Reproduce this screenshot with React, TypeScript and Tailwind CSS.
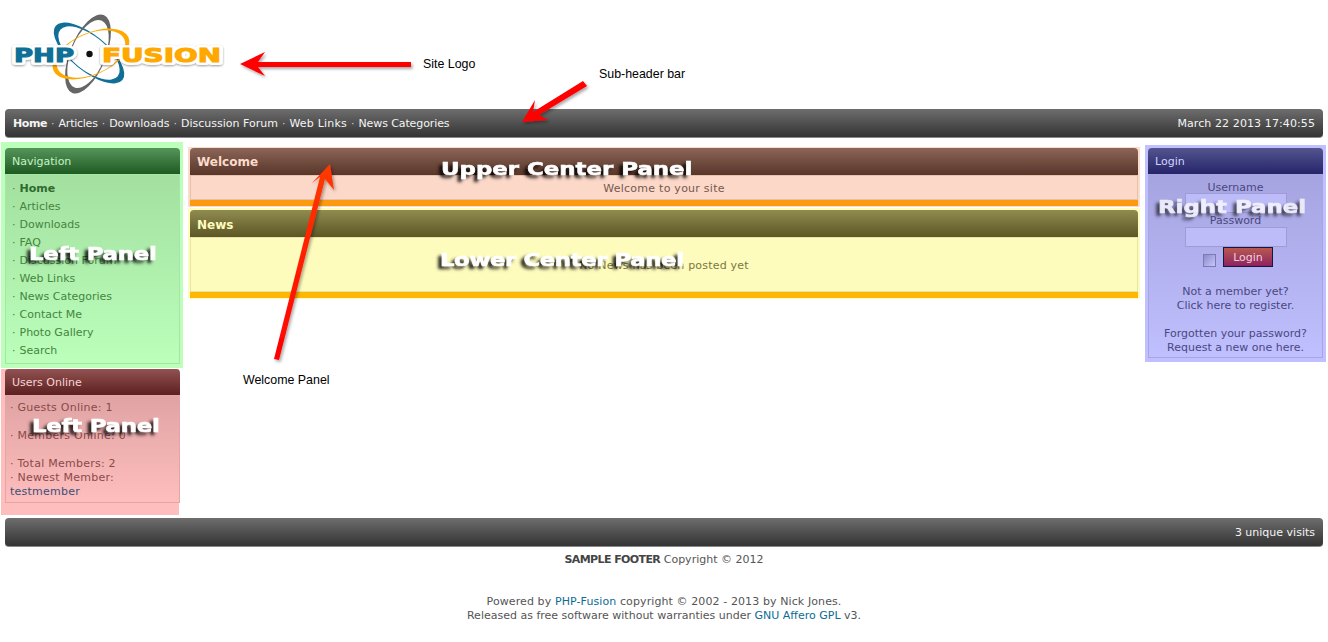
const F = "font-['DejaVu_Sans',Verdana,sans-serif]";

function Overlay({ x, y, text, cls = "" }: { x: number; y: number; text: string; cls?: string }) {
  return (
    <div
      className={`absolute origin-left scale-x-[1.27] font-['DejaVu_Sans',sans-serif] font-bold text-[18px] leading-[20px] text-white whitespace-nowrap [-webkit-text-stroke:0.6px_white] [text-shadow:-3px_3px_3px_rgba(0,0,0,0.9)] ${cls}`}
      style={{ left: x, top: y }}
    >
      {text}
    </div>
  );
}

function Note({ x, y, text }: { x: number; y: number; text: string }) {
  return (
    <div className="absolute font-['Liberation_Sans',sans-serif] text-[12.4px] leading-[14px] text-black whitespace-nowrap" style={{ left: x, top: y }}>
      {text}
    </div>
  );
}

function Ring({ cx, cy, a, b, t, side, angle, color }: { cx: number; cy: number; a: number; b: number; t: number; side: number; angle: number; color: string }) {
  // crescent ring: thick at the two ends of the long axis, thin along the sides
  const e = (rx: number, ry: number) => `M${cx - rx} ${cy}A${rx} ${ry} 0 1 0 ${cx + rx} ${cy}A${rx} ${ry} 0 1 0 ${cx - rx} ${cy}Z`;
  return <path d={`${e(a, b)}${e(a - t, b - side)}`} fillRule="evenodd" fill={color} transform={`rotate(${angle} ${cx} ${cy})`} />;
}

function Logo() {
  const txt = { fontFamily: "DejaVu Sans", fontWeight: "bold", fontSize: 19 } as const;
  return (
    <svg width="240" height="100" viewBox="0 0 240 100" className="block">
      <defs>
        <filter id="ls" x="-10%" y="-40%" width="120%" height="180%">
          <feDropShadow dx="0" dy="1" stdDeviation="1.2" floodColor="#000" floodOpacity="0.4" />
        </filter>
      </defs>
      <Ring cx={89} cy={53} a={43} b={18} t={6} side={1} angle={39} color="#0f6f96" />
      <Ring cx={88} cy={54} a={42} b={18} t={6} side={1} angle={-68} color="#666666" />
      <Ring cx={91} cy={54} a={41} b={21} t={4.5} side={0.7} angle={-24} color="#ffa800" />
      <g filter="url(#ls)" stroke="#fff" strokeWidth="6" strokeLinejoin="round">
        <text x="14" y="62" textLength="60" lengthAdjust="spacingAndGlyphs" {...txt} fill="#fff">PHP</text>
        <text x="102" y="62" textLength="119" lengthAdjust="spacingAndGlyphs" {...txt} fill="#fff">FUSION</text>
      </g>
      <text x="14" y="62" textLength="60" lengthAdjust="spacingAndGlyphs" {...txt} fill="#0f6f96" stroke="#0f6f96" strokeWidth="1">PHP</text>
      <circle cx="89.5" cy="54" r="7" fill="#fff" />
      <circle cx="89.5" cy="54" r="3.2" fill="#111" />
      <text x="102" y="62" textLength="119" lengthAdjust="spacingAndGlyphs" {...txt} fill="#ffa800" stroke="#ffa800" strokeWidth="1">FUSION</text>
    </svg>
  );
}

function Bar({ left, right }: { left?: React.ReactNode; right: React.ReactNode }) {
  return (
    <div className="mx-[5px] h-[29px] rounded-[4px] bg-gradient-to-b from-[#6e6e6e] to-[#343434] border-b border-[#8a8a8a] flex items-center justify-between px-2 pt-[2px] text-[#f4f4f4] text-[11px]">
      <div>{left}</div>
      <div>{right}</div>
    </div>
  );
}

function SideHead({ title, cls }: { title: string; cls: string }) {
  return (
    <div className={`h-[26px] rounded-t-[4px] flex items-center px-[7px] pt-[3px] text-[11px] ${cls}`}>{title}</div>
  );
}

const navItems = ["Home", "Articles", "Downloads", "FAQ", "Discussion Forum", "Web Links", "News Categories", "Contact Me", "Photo Gallery", "Search"];
const topItems = [
  { t: "Articles", c: "tracking-[-0.25px]" },
  { t: "Downloads", c: "" },
  { t: "Discussion Forum", c: "" },
  { t: "Web Links", c: "tracking-[0.2px]" },
  { t: "News Categories", c: "tracking-[-0.1px]" },
];

export default function App() {
  return (
    <div className={`relative w-[1328px] h-[642px] overflow-hidden bg-white text-[11px] ${F}`}>
      <header className="h-[109px]">
        <Logo />
      </header>

      <Bar
        left={
          <span>
            <b className="tracking-[-0.4px]">Home</b>
            {topItems.map(({ t, c }) => (
              <span key={t}>
                <span className="mx-[4px] text-[#ccc]">·</span>
                <span className={c}>{t}</span>
              </span>
            ))}
          </span>
        }
        right={<span className="tracking-[0.1px]">March 22 2013 17:40:55</span>}
      />

      <main className="flex items-start mt-[4px] h-[376px]">
        {/* left column */}
        <aside className="w-[188px] shrink-0 flex flex-col pl-[1px]">
          <div className="w-[182px] h-[226px] bg-[#bbffbb] pt-[6px] pl-[4px] pr-[3px]">
            <SideHead title="Navigation" cls="bg-gradient-to-b from-[#55955a] to-[#1d5b23] text-[#c6f2c6]" />
            <div className="h-[190px] border border-[#a5e5a5] bg-gradient-to-b from-[#a3e09f] to-[#bbffbb] pt-[5px] pl-[6px] text-[#45853f]">
              {navItems.map((n, i) => (
                <div key={n} className="h-[18px] leading-[18px] whitespace-nowrap">
                  <span className="mr-[4px]">·</span>
                  {i === 0 ? <b className="text-[#2f6a2f]">{n}</b> : n}
                </div>
              ))}
            </div>
          </div>
          <div className="w-[178px] h-[146px] mt-[1px] bg-[#ffbebe] pl-[4px] relative">
            <div className="w-[175px]">
              <SideHead title="Users Online" cls="bg-gradient-to-b from-[#925252] to-[#5c2020] text-[#f5d5d5]" />
              <div className="h-[108px] border border-[#e5a5a5] bg-gradient-to-b from-[#e0a3a3] to-[#ffbebe] pt-[5px] pl-[4px] text-[#8a4a4a] leading-[14px] tracking-[0.25px]">
                <div>· Guests Online: 1</div>
                <div className="mt-[14px]">· Members Online: 0</div>
                <div className="mt-[14px]">· Total Members: 2</div>
                <div>· Newest Member:</div>
                <div className="text-[#3a5078]">testmember</div>
              </div>
            </div>
          </div>
        </aside>

        {/* center column */}
        <section className="flex-1 min-w-0 flex flex-col pt-[5px]">
          <div className="w-[952px] h-[60px] bg-[#fbdccb] px-[2px] pt-[1px]">
            <div className="h-[27px] rounded-t-[4px] bg-gradient-to-b from-[#8c6658] to-[#583629] flex items-center px-[7px] pt-[1px] font-bold text-[12px] text-[#fbdccb]">Welcome</div>
            <div className="h-[25px] border border-[#e8c0ae] bg-[#fcd8c8] text-center leading-[25px] text-[#75584e] tracking-[0.25px]">Welcome to your site</div>
            <div className="h-[6px] bg-[#fb9a0e]" />
          </div>
          <div className="w-[952px] mt-[1px] h-[91px] bg-[#fefcbd] px-[2px] pt-[2px]">
            <div className="h-[27px] rounded-t-[4px] bg-gradient-to-b from-[#908c50] to-[#5c5725] flex items-center px-[7px] pt-[2px] font-bold text-[12px] text-[#fefcbd]">News</div>
            <div className="h-[55px] border border-[#e8e4a8] bg-[#fefcbd] text-center leading-[56px] text-[#7a7640] tracking-[0.2px]">No News has been posted yet</div>
            <div className="h-[6px] bg-[#fdb805]" />
          </div>
        </section>

        {/* right column */}
        <aside className="w-[181px] h-[217px] shrink-0 mr-[2px] mt-[3px] bg-[#c0bfff] pt-[3px] px-[3px]">
          <SideHead title="Login" cls="bg-gradient-to-b from-[#54548f] to-[#26246a] text-[#d4d3ff]" />
          <div className="h-[184px] border border-[#a8a6e0] bg-gradient-to-b from-[#a6a4e0] to-[#c0bfff] text-center text-[#4a4880] pt-[6px] leading-[14px]">
            <div>Username</div>
            <div className="mx-auto -mt-[2px] w-[102px] h-[20px] border border-[#9d9bd8] bg-[#bdbbf8]" />
            <div className="h-[14px] pt-[1px]">Password</div>
            <div className="mx-auto w-[102px] h-[20px] border border-[#9d9bd8] bg-[#bdbbf8]" />
            <div className="flex items-center justify-center gap-[7px] pl-[5px]">
              <span className="w-[13px] h-[13px] border border-[#7c7ab0] bg-gradient-to-br from-[#8e8cc8] to-[#c6c5ff] mt-[6px]" />
              <span className="w-[50px] h-[20px] border border-[#1a1440] bg-gradient-to-b from-[#b8584e] to-[#8e1f5e] text-[#f0d0e0] leading-[20px]">Login</span>
            </div>
            <div className="mt-[18px]">Not a member yet?</div>
            <div>Click here to register.</div>
            <div className="mt-[14px]">Forgotten your password?</div>
            <div>Request a new one here.</div>
          </div>
        </aside>
      </main>

      <Bar right="3 unique visits" />

      <footer className="text-center text-[#555] leading-[14px]">
        <div className="mt-[6px]"><b className="text-[#444] tracking-[-0.6px]">SAMPLE FOOTER</b> Copyright © 2012</div>
        <div className="mt-[28px] tracking-[0.1px]">
          Powered by <span className="text-[#0b6c94]">PHP-Fusion</span> copyright © 2002 - 2013 by Nick Jones.
        </div>
        <div>
          Released as free software without warranties under <span className="text-[#0b6c94]">GNU Affero GPL</span> v3.
        </div>
      </footer>

      {/* annotations */}
      <svg className="absolute left-0 top-0 pointer-events-none" width="1328" height="642">
        <defs>
          <linearGradient id="arr" x1="0" y1="1" x2="0" y2="0">
            <stop offset="0" stopColor="#ff0000" />
            <stop offset="1" stopColor="#ff3a00" />
          </linearGradient>
          <filter id="as" x="-20%" y="-20%" width="140%" height="140%">
            <feDropShadow dx="1.5" dy="2" stdDeviation="1.5" floodColor="#000" floodOpacity="0.35" />
          </filter>
        </defs>
        <polygon filter="url(#as)" fill="#f00" points="240,64 265,52 258,62 411,62 411,67 258,67 265,76" />
        <polygon filter="url(#as)" fill="#f00" points="522,122 535,100 533,112 583,81 587,86 539,115 548,120" />
        <polygon filter="url(#as)" fill="url(#arr)" points="330,164 334,190 325,179 279,360 274,359 320,177 312,183" />
      </svg>
      <Note x={423} y={57} text="Site Logo" />
      <Note x={599} y={67} text="Sub-header bar" />
      <Note x={243} y={373} text="Welcome Panel" />
      <Overlay x={441} y={159} text="Upper Center Panel" />
      <Overlay x={440} y={250} text="Lower Center Panel" cls="tracking-[-0.35px]" />
      <Overlay x={29} y={244} text="Left Panel" cls="tracking-[-0.2px]" />
      <Overlay x={32} y={416} text="Left Panel" cls="tracking-[-0.2px]" />
      <Overlay x={1158} y={197} text="Right Panel" cls="opacity-75" />
    </div>
  );
}
